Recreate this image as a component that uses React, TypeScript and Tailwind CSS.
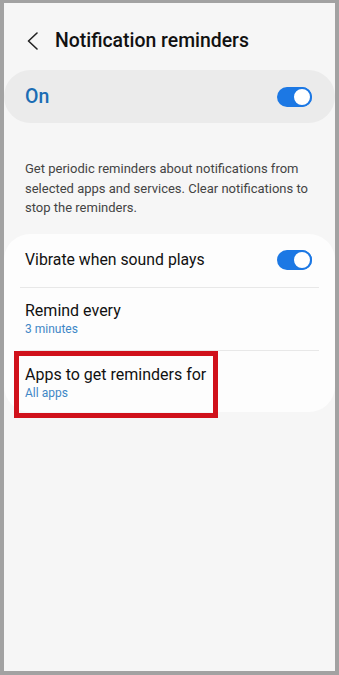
import React from "react";

function Toggle() {
  return (
    <div className="relative w-[35px] h-[20px] rounded-full bg-[#1c78e4]">
      <div className="absolute right-0 top-0 w-[20px] h-[20px] rounded-full bg-white border-2 border-[#1c78e4]" />
    </div>
  );
}

export default function App() {
  return (
    <div
      className="w-[339px] h-[675px] bg-[#a2a2a2] pt-[3px] pl-[4px] pr-[4px] pb-[4px]"
      style={{ fontFamily: "Roboto, 'Noto Sans', sans-serif" }}
    >
      <div className="h-full bg-[#f6f6f6] flex flex-col">
        <div className="pt-[26px] flex items-center h-[50px]">
          <svg className="ml-[23px] w-[12px] h-[18px]" viewBox="0 0 12 18" fill="none">
            <polyline points="10,1 1.5,9 10,17" stroke="#222" strokeWidth="1.6" strokeLinecap="round" strokeLinejoin="round" />
          </svg>
          <span className="ml-[16px] text-[19.4px] leading-[24px] font-medium text-[#111]">Notification reminders</span>
        </div>

        <div className="mt-[17px] h-[53px] rounded-[27px] bg-[#ebebeb] flex items-center justify-between pl-[21px] pr-[23px]">
          <span className="text-[19.5px] font-medium text-[#1b6db4]">On</span>
          <Toggle />
        </div>

        <p className="mt-[36px] pl-[21px] pr-[16px] text-[13px] leading-[19.5px] text-[#444]">
          Get periodic reminders about notifications from selected apps and services. Clear notifications to stop the reminders.
        </p>

        <div className="relative mt-[16px] rounded-[26px] bg-[#fdfdfd] pb-[11px]">
          <div className="h-[53px] flex items-center justify-between pl-[21px] pr-[23px]">
            <span className="text-[15.8px] text-[#111]">Vibrate when sound plays</span>
            <Toggle />
          </div>
          <div className="mx-[16px] h-px bg-[#e8e8e8]" />
          <div className="pl-[21px] pt-[13.5px] pb-[13px]">
            <div className="text-[16px] leading-[20px] text-[#111]">Remind every</div>
            <div className="text-[12px] leading-[16px] text-[#3f87c6]">3 minutes</div>
          </div>
          <div className="mx-[16px] h-px bg-[#e8e8e8]" />
          <div className="pl-[21px] pt-[13.5px]">
            <div className="text-[16px] leading-[20px] text-[#111]">Apps to get reminders for</div>
            <div className="text-[12px] leading-[16px] text-[#3f87c6]">All apps</div>
          </div>
          <div className="absolute left-[10px] top-[117px] w-[204px] h-[67px] border-[5px] border-[#d0111b]" />
        </div>
      </div>
    </div>
  );
}
